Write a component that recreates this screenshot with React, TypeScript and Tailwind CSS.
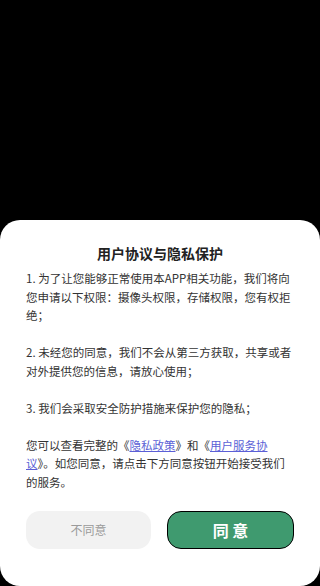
const PrivacyDialog = () => {
  return (
    <div className="w-full rounded-[20px] bg-white px-[26px] pt-[23px] pb-[37px]">
      <h1 className="text-center text-[14px] leading-[20px] font-bold text-[#222]">用户协议与隐私保护</h1>
      <div className="mt-[6px] text-[11.5px] leading-[18.5px] text-[#333]">
        <p>1. 为了让您能够正常使用本APP相关功能，我们将向您申请以下权限：摄像头权限，存储权限，您有权拒绝；</p>
        <p className="mt-[18.5px]">2. 未经您的同意，我们不会从第三方获取，共享或者对外提供您的信息，请放心使用；</p>
        <p className="mt-[18.5px]">3. 我们会采取安全防护措施来保护您的隐私；</p>
        <p className="mt-[18.5px]">
          您可以查看完整的《<span className="text-[#5b5fd6] underline">隐私政策</span>》和《<span className="text-[#5b5fd6] underline">用户服务协议</span>》。如您同意，请点击下方同意按钮开始接受我们的服务。
        </p>
      </div>
      <div className="mt-[20px] flex gap-4">
        <button className="h-[38px] flex-1 rounded-[14px] bg-[#f2f2f2] text-[12px] text-[#9a9a9a]">不同意</button>
        <button className="h-[38px] flex-1 rounded-[14px] border-[1.5px] border-black bg-[#3f9a6f] text-[16px] font-bold text-white">
          同 意
        </button>
      </div>
    </div>
  )
}

export default function App() {
  return (
    <div
      className="flex h-[586px] w-[320px] flex-col justify-end bg-black"
      style={{ fontFamily: '"Noto Sans CJK SC", "Noto Sans", sans-serif' }}
    >
      <PrivacyDialog />
    </div>
  )
}
